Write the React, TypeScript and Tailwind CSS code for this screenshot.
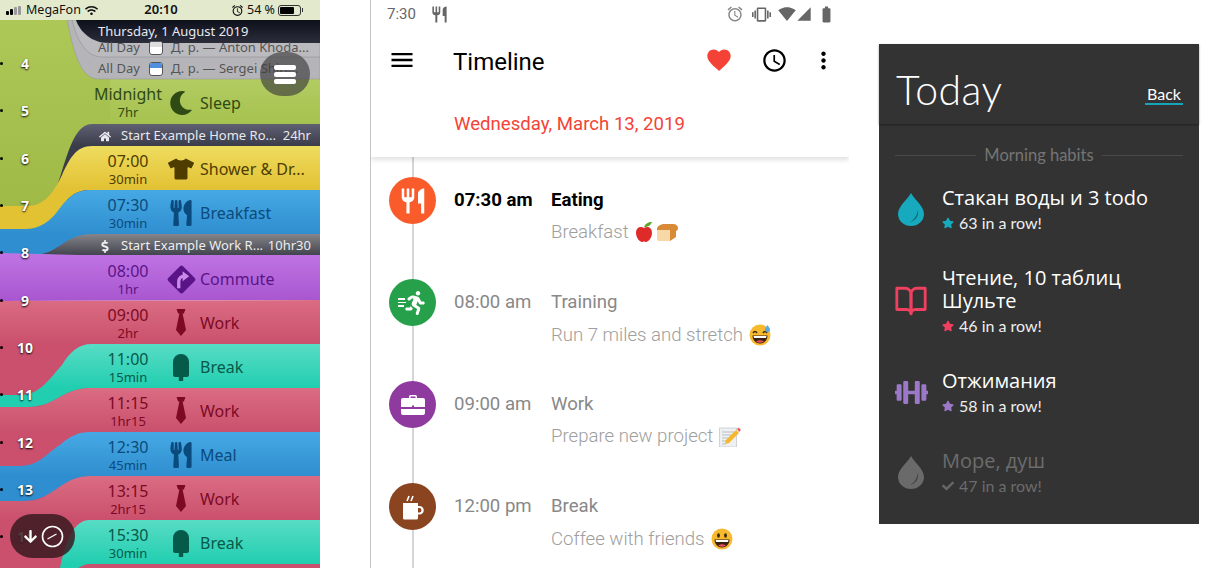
import React from "react";
import { FaTshirt, FaUtensils, FaHome, FaDollarSign, FaMoon, FaWifi, FaDumbbell, FaStar, FaCheck, FaRunning, FaArrowDown } from "react-icons/fa";
import { MdMenu, MdFavorite, MdAccessTime, MdMoreVert, MdAccessAlarm, MdVibration, MdSignalWifi4Bar, MdSignalCellular4Bar, MdBatteryFull, MdRestaurant, MdAlarm } from "react-icons/md";
import { FiBookOpen } from "react-icons/fi";

const Tie = ({ c }: { c: string }) => (
  <svg width="14" height="28" viewBox="0 0 14 28"><path fill={c} d="M2.5 0h9l-1.6 4.5H8.6L12 21l-5 6-5-6L5.4 4.5H4.1z" /></svg>
);
const Pop = ({ c }: { c: string }) => (
  <svg width="18" height="28" viewBox="0 0 18 28"><path fill={c} d="M1 9a8 8 0 0 1 16 0v13a2 2 0 0 1-2 2h-3.8v3a2 2 0 0 1-4.4 0v-3H3a2 2 0 0 1-2-2z" /></svg>
);
const Turn = () => (
  <svg width="33" height="33" viewBox="0 0 30 30" className="shrink-0 -mx-[3px]">
    <rect x="5.500" y="5.500" width="19" height="19" rx="2" transform="rotate(45 15 15)" fill="#5a1487" />
    <path d="M12.500 23v-6c0-3 2-5 5-5" fill="none" stroke="#c98ae8" strokeWidth="3" />
    <path d="M16 7.500l6 4.500-6 4.500z" fill="#c98ae8" />
  </svg>
);
const Drop = ({ c, d }: { c: string; d: string }) => (
  <svg width="26" height="33" viewBox="0 0 26 33">
    <path fill={c} d="M13 0c3 6 13 13 13 21a13 12 0 0 1-26 0C0 13 10 6 13 0z" />
    <path fill={d} d="M20 17c1 6-3 11-8 12 4-2 7-6 8-12z" />
  </svg>
);
const Cal = ({ top }: { top: string }) => (
  <div className="w-[14px] h-[14px] rounded-[3px] bg-white border border-[#555] overflow-hidden shrink-0">
    <div className={`h-[5px] ${top}`} />
  </div>
);
const Case = () => (
  <svg width="26" height="22" viewBox="0 0 26 22">
    <path fill="#fff" d="M9 4V2.500A1.500 1.500 0 0 1 10.500 1h5A1.500 1.500 0 0 1 17 2.500V4h6a2 2 0 0 1 2 2v7H1V6a2 2 0 0 1 2-2zm1.500 0h5V2.500h-5z" />
    <path fill="#fff" d="M1 15h24v4a2 2 0 0 1-2 2H3a2 2 0 0 1-2-2z" />
    <rect x="12" y="11.500" width="2" height="2" fill="#8e3a9e" />
  </svg>
);
const Cup = () => (
  <svg width="22" height="26" viewBox="0 0 22 26">
    <path d="M5 7l2-5M9 7l2-5" stroke="#fff" strokeWidth="1.600" />
    <path fill="#fff" d="M1 9h15v3h1.500a4 4 0 0 1 0 8.500H16V24a1.500 1.500 0 0 1-1.500 1.500h-12A1.500 1.500 0 0 1 1 24zm15 5v4.500h1.200a2.250 2.250 0 0 0 0-4.500z" />
  </svg>
);

const Apple = () => (
  <svg width="18" height="20" viewBox="0 0 18 20" className="inline-block">
    <path fill="#df2a2a" d="M9 6c3-2 8-1 8 5 0 5-4 9-6 9-1 0-1-.5-2-.5S8 20 7 20c-2 0-6-4-6-9 0-6 5-7 8-5z" />
    <path fill="#5fa32c" d="M9 5c1-3 4-5 8-5-1 3-4 5-8 5z" />
  </svg>
);
const Bread = () => (
  <svg width="22" height="18" viewBox="0 0 22 18" className="inline-block">
    <path fill="#f6d9a6" d="M1 7h13v11H3a2 2 0 0 1-2-2z" />
    <path fill="#d98a36" d="M1 6c0-3 4-5 8-5h8c3 0 5 2 5 4s-1 3-2 3v6l-6 4V7H1z" />
  </svg>
);
const Smile = ({ sweat }: { sweat?: boolean }) => (
  <svg width="22" height="22" viewBox="0 0 22 22" className="inline-block">
    <circle cx="11" cy="11" r="10.5" fill="#f7b92e" />
    {sweat ? (
      <>
        <path d="M4 9q2-3 4 0M14 9q2-3 4 0" stroke="#3a2a10" strokeWidth="1.5" fill="none" />
        <path fill="#5aa9e6" d="M18.5 1c1 2 2.5 3 2.5 4.500a2.500 2.500 0 0 1-5 0C16 4 17.500 3 18.500 1z" />
      </>
    ) : (
      <>
        <ellipse cx="7.500" cy="7.500" rx="1.400" ry="2.200" fill="#3a2a10" />
        <ellipse cx="14.500" cy="7.500" rx="1.400" ry="2.200" fill="#3a2a10" />
      </>
    )}
    <path fill="#3a2010" d="M3.500 11.500h15c0 4.500-3.500 8-7.500 8s-7.500-3.500-7.500-8z" />
    <path fill="#fff" d="M4.500 12h13l-.5 2H5z" />
    <path fill="#e8505b" d="M7 17.500q4-2.500 8 0-4 2.500-8 0z" />
  </svg>
);
const Memo = () => (
  <svg width="22" height="20" viewBox="0 0 22 20" className="inline-block">
    <rect x="0.500" y="1" width="17" height="19" fill="#eef0f2" stroke="#cfd3d6" />
    <path d="M3 5h12M3 8h12M3 11h9M3 14h6M3 17h4" stroke="#b9bfc4" strokeWidth="1" />
    <path fill="#f5b72e" d="M17 3l3 3-10 10-4 1 1-4z" />
    <path fill="#ee5a5a" d="M18 2l1.500-1.500 2.500 2.500L20 5z" />
  </svg>
);

const Row = ({ time, dur, icon, label, color }: { time: string; dur: string; icon: React.ReactNode; label: string; color: string }) => (
  <div className={`h-[44px] flex items-center pl-[88px] pt-[2px] ${color}`}>
    <div className="w-[80px] text-center">
      <div className="text-[16px] leading-[19px]">{time}</div>
      <div className="text-[13px] leading-[16px]">{dur}</div>
    </div>
    <div className="w-[26px] flex justify-center">{icon}</div>
    <div className="ml-[6px] text-[16px] whitespace-nowrap">{label}</div>
  </div>
);

const Band = ({ id, y1, y2, c1, c2, d }: { id: string; y1: number; y2: number; c1: string; c2: string; d: string }) => (
  <>
    <linearGradient id={id} gradientUnits="userSpaceOnUse" x1="0" x2="0" y1={y1} y2={y2}>
      <stop offset="0" stopColor={c1} />
      <stop offset="1" stopColor={c2} />
    </linearGradient>
    <path d={d} fill={`url(#${id})`} />
  </>
);

const hours = ["4", "5", "6", "7", "8", "9", "10", "11", "12", "13", "14"];

function LeftPhone() {
  return (
    <div className="relative w-[320px] h-[568px] overflow-hidden shrink-0 font-['Noto_Sans',sans-serif]">
      <svg className="absolute inset-0" width="320" height="568" viewBox="0 0 320 568">
        <Band id="g" y1={20} y2={240} c1="#adc857" c2="#9cb743" d="M0 0H320V200H80V230H0Z" />
        <Band id="g2" y1={79} y2={124} c1="#b2cc62" c2="#a6c24e" d="M110 79H320V130H110Z" />
        <path d="M67 20C72 42 78 79 98 79H320V20Z" fill="#b5b5b9" stroke="#98989c" strokeWidth="0.6" />
        <path d="M72 20C76 36 84 57 102 57H320V20Z" fill="#bbbbbf" stroke="#9c9ca0" strokeWidth="0.8" />
        <Band id="h" y1={20} y2={43} c1="#0e111c" c2="#2b2d3a" d="M76 20C80 32 92 43 108 43H320V20Z" />
        <Band id="dk" y1={124} y2={146} c1="#5f6173" c2="#3a3c4a" d="M50 206C65 170 70 124 92 124H320V200H60Z" />
        <Band id="y" y1={146} y2={190} c1="#efdc5e" c2="#e2c133" d="M0 206H28C45 206 55 190 62 175C70 158 76 146 92 146H320V190H90C75 190 68 198 60 208C50 222 40 229 25 229H0Z" />
        <Band id="b" y1={190} y2={234} c1="#46a9e5" c2="#2f8ecf" d="M0 229H25C40 229 50 222 60 208C68 198 75 190 90 190H320V258H0Z" />
        <Band id="dk2" y1={234} y2={256} c1="#85858a" c2="#3f414b" d="M42 254C60 250 68 234 92 234H320V257H80Z" />
        <Band id="p" y1={254} y2={300} c1="#bf74e3" c2="#a957d0" d="M0 253L80 255H320V300L0 301Z" />
        <Band id="r1" y1={300} y2={344} c1="#da6c83" c2="#ca506d" d="M0 301L320 300V420H0Z" />
        <Band id="r2" y1={388} y2={432} c1="#da6c83" c2="#ca506d" d="M0 407H35C50 407 65 388 90 388H320V510H0Z" />
        <Band id="t1" y1={344} y2={388} c1="#58dcc6" c2="#21ceb0" d="M0 395H20C40 395 50 378 62 365C70 352 78 344 92 344H320V388H90C70 388 60 398 50 402C40 407 30 407 20 407H0Z" />
        <Band id="r3" y1={476} y2={520} c1="#da6c83" c2="#ca506d" d="M0 501H30C50 501 60 476 90 476H320V568H0Z" />
        <Band id="b2" y1={432} y2={476} c1="#46a9e5" c2="#2f8ecf" d="M0 466H20C40 466 50 450 60 445C70 436 78 432 90 432H320V476H90C70 476 60 488 50 493C40 500 30 501 20 501H0Z" />
        <Band id="t2" y1={520} y2={564} c1="#58dcc6" c2="#21ceb0" d="M60 568C65 545 72 520 90 520H320V564H90C85 564 82 566 78 568Z" />
      </svg>

      <div className="absolute left-0 top-[40px] w-[50px] flex flex-col">
        {hours.map((h) => (
          <div key={h} className="h-[47.33px] flex items-center relative">
            <span className="w-[3px] h-[3px] rounded-full bg-black" />
            <span className="absolute left-0 w-[50px] text-center text-white text-[14px] font-bold [text-shadow:0_1px_2px_#000]">{h}</span>
          </div>
        ))}
      </div>

      <div className="relative flex flex-col">
        <div className="h-[20px] bg-[#e3e9cd] flex items-center px-[6px] text-[12.5px] text-[#111]">
          <div className="flex items-end gap-[1px] h-[9px] w-[16px]">
            <span className="w-[3px] h-[4px] bg-black rounded-[1px]" />
            <span className="w-[3px] h-[6px] bg-black rounded-[1px]" />
            <span className="w-[3px] h-[8px] bg-[#999] rounded-[1px]" />
            <span className="w-[3px] h-[9px] bg-[#999] rounded-[1px]" />
          </div>
          <span className="ml-[4px] w-[59px]">MegaFon</span>
          <FaWifi className="text-[13px]" />
          <span className="ml-[43px] font-semibold w-[40px] text-center text-[13px]">20:10</span>
          <MdAlarm className="ml-[50px] text-[13px]" />
          <span className="ml-[3px] w-[31px] whitespace-nowrap">54 %</span>
          <div className="w-[23px] h-[11px] rounded-[3px] border border-[#333] p-[1px]"><div className="w-[14px] h-full bg-black rounded-[1px]" /></div>
          <span className="w-[1px] h-[4px] bg-[#333] ml-[1px]" />
        </div>
        <div className="h-[23px] pl-[98px] flex items-center text-[13px] text-[#e8e8ee]">Thursday, 1 August 2019</div>
        <div className="h-[15px] -mt-[3px] pl-[98px] flex items-center gap-[8px] text-[13px] text-[#555] whitespace-nowrap">
          <span className="w-[43px]">All Day</span><Cal top="bg-[#dddddd]" /><span>Д. р. — Anton Khoda...</span>
        </div>
        <div className="h-[24px] pt-[4px] pl-[98px] flex items-center gap-[8px] text-[13px] text-[#555] whitespace-nowrap">
          <span className="w-[43px]">All Day</span><Cal top="bg-[#4f8fe0]" /><span>Д. р. — Sergei Shirr...</span>
        </div>
        <Row time="Midnight" dur="7hr" label="Sleep" color="h-[45px] text-[#2f4a14]" icon={<FaMoon className="text-[24px]" />} />
        <div className="h-[22px] flex items-center pl-[99px] pr-[9px] pt-[2px] text-[13px] text-[#e8e8ee] whitespace-nowrap">
          <FaHome className="text-[11px] w-[12px]" /><span className="ml-[10px] flex-1">Start Example Home Ro...</span><span>24hr</span>
        </div>
        <Row time="07:00" dur="30min" label="Shower & Dr..." color="text-[#4f3d00]" icon={<FaTshirt className="text-[26px]" />} />
        <Row time="07:30" dur="30min" label="Breakfast" color="text-[#0b4a7c]" icon={<FaUtensils className="text-[26px]" />} />
        <div className="h-[22px] flex items-center pl-[99px] pr-[9px] pt-[2px] text-[13px] text-[#eeeeee] whitespace-nowrap">
          <FaDollarSign className="text-[13px] w-[12px]" /><span className="ml-[10px] flex-1">Start Example Work R...</span><span>10hr30</span>
        </div>
        <Row time="08:00" dur="1hr" label="Commute" color="text-[#5a1487]" icon={<Turn />} />
        <Row time="09:00" dur="2hr" label="Work" color="text-[#7c0a24]" icon={<Tie c="#7c0a24" />} />
        <Row time="11:00" dur="15min" label="Break" color="text-[#055a4a]" icon={<Pop c="#055a4a" />} />
        <Row time="11:15" dur="1hr15" label="Work" color="text-[#7c0a24]" icon={<Tie c="#7c0a24" />} />
        <Row time="12:30" dur="45min" label="Meal" color="text-[#0b4a7c]" icon={<FaUtensils className="text-[26px]" />} />
        <Row time="13:15" dur="2hr15" label="Work" color="text-[#7c0a24]" icon={<Tie c="#7c0a24" />} />
        <Row time="15:30" dur="30min" label="Break" color="text-[#055a4a]" icon={<Pop c="#055a4a" />} />
      </div>

      <div className="absolute left-[260px] top-[52px] w-[50px] h-[44px] rounded-full bg-[#3c3c3c]/65 flex flex-col items-center justify-center gap-[2px]">
        <span className="w-[22px] h-[5px] bg-white rounded-[2px]" />
        <span className="w-[22px] h-[5px] bg-white rounded-[2px]" />
        <span className="w-[22px] h-[5px] bg-white rounded-[2px]" />
      </div>
      <div className="absolute left-[10px] top-[514px] w-[65px] h-[44px] rounded-full bg-[#3a1a20]/85 flex items-center pl-[13px] gap-[3px] text-white">
        <FaArrowDown className="text-[15px]" />
        <svg width="23" height="23" viewBox="0 0 23 23"><circle cx="11.500" cy="11.500" r="10" fill="none" stroke="#fff" strokeWidth="1.600" /><path d="M6.500 14l9-5" stroke="#fff" strokeWidth="1.300" /></svg>
      </div>
    </div>
  );
}

const items = [
  { time: "07:30 am", title: "Eating", sub: "Breakfast", em: <span className="inline-flex items-center gap-[3px] ml-[6px]"><Apple /><Bread /></span>, bg: "bg-[#f95c2a]", icon: <MdRestaurant className="text-[30px]" />, active: true },
  { time: "08:00 am", title: "Training", sub: "Run 7 miles and stretch", em: <span className="ml-[6px]"><Smile sweat /></span>, bg: "bg-[#26a04a]", icon: <span className="flex items-center"><span className="flex flex-col gap-[2px] mr-[-3px]"><i className="block w-[7px] h-[1.500px] bg-white" /><i className="block w-[8px] h-[1.500px] bg-white" /><i className="block w-[6px] h-[1.500px] bg-white" /></span><FaRunning className="text-[24px]" /></span>, active: false },
  { time: "09:00 am", title: "Work", sub: "Prepare new project", em: <span className="ml-[6px]"><Memo /></span>, bg: "bg-[#8e3a9e]", icon: <Case />, active: false },
  { time: "12:00 pm", title: "Break", sub: "Coffee with friends", em: <span className="ml-[6px]"><Smile /></span>, bg: "bg-[#8a4420]", icon: <Cup />, active: false },
];

function MiddlePhone() {
  return (
    <div className="ml-[50px] w-[479px] h-[568px] border-l border-[#c4c4c4] shrink-0 overflow-hidden font-['Roboto',sans-serif] relative bg-white">
      <div className="relative z-10 h-[157px] bg-white shadow-[0_3px_5px_rgba(0,0,0,0.12)]">
        <div className="h-[28px] flex items-center pl-[16px] pr-[16px] text-[#666]">
          <span className="text-[15px]">7:30</span>
          <MdRestaurant className="ml-[14px] text-[19px]" />
          <span className="flex-1" />
          <MdAccessAlarm className="text-[18px] mr-[8px] text-[#888]" />
          <MdVibration className="text-[19px] mr-[7px]" />
          <MdSignalWifi4Bar className="text-[18px]" />
          <MdSignalCellular4Bar className="text-[16px] mr-[5px]" />
          <MdBatteryFull className="text-[19px] mr-[-3px]" />
        </div>
        <div className="h-[64px] flex items-center text-black">
          <MdMenu className="ml-[17px] text-[28px]" />
          <span className="ml-[37px] mt-[3px] text-[24px]">Timeline</span>
          <span className="flex-1" />
          <MdFavorite className="text-[28px] text-[#f44336]" />
          <MdAccessTime className="ml-[28px] text-[27px]" />
          <MdMoreVert className="ml-[22px] mr-[12px] text-[27px]" />
        </div>
        <div className="pl-[83px] pt-[19px] text-[18.6px] text-[#f44336]">Wednesday, March 13, 2019</div>
      </div>
      <div className="relative pt-[20px]">
        <div className="absolute left-[41px] top-0 bottom-0 w-[2px] bg-[#d6d6d6]" />
        {items.map((it) => (
          <div key={it.time} className="relative h-[102px] flex items-start pl-[18px]">
            <div className={`w-[47px] h-[47px] rounded-full flex items-center justify-center text-white shrink-0 ${it.bg}`}>{it.icon}</div>
            <div className={`ml-[18px] w-[97px] mt-[12px] text-[18.6px] leading-[22px] whitespace-nowrap ${it.active ? "font-bold text-black" : "text-[#888]"}`}>{it.time}</div>
            <div className="mt-[12px]">
              <div className={`text-[18.6px] leading-[22px] ${it.active ? "font-bold text-black" : "text-[#888]"}`}>{it.title}</div>
              <div className="mt-[10px] text-[18.6px] leading-[22px] font-light text-[#9e9e9e] flex items-center whitespace-nowrap">{it.sub}{it.em}</div>
            </div>
          </div>
        ))}
      </div>
    </div>
  );
}

const habits = [
  { title: ["Стакан воды и 3 todo"], n: "63 in a row!", c: "text-[#17a9bd]", icon: <Drop c="#17a9bd" d="#0d5f6b" />, done: false },
  { title: ["Чтение, 10 таблиц", "Шульте"], n: "46 in a row!", c: "text-[#f0405f]", icon: <FiBookOpen className="text-[34px] text-[#f0405f]" />, done: false },
  { title: ["Отжимания"], n: "58 in a row!", c: "text-[#9c78c8]", icon: <FaDumbbell className="text-[33px] text-[#9c78c8]" />, done: false },
  { title: ["Море, душ"], n: "47 in a row!", c: "text-[#666]", icon: <Drop c="#6a6a6a" d="#3c3c3c" />, done: true },
];

function RightPhone() {
  return (
    <div className="ml-[30px] mt-[44px] w-[320px] h-[480px] bg-[#333333] shrink-0 font-['Lato','Open_Sans',sans-serif]">
      <div className="h-[80px] flex items-center pl-[17px] pr-[16px] shadow-[0_1px_2px_rgba(0,0,0,0.4)]">
        <span className="text-[41px] font-light text-white flex-1 mt-[12px] tracking-[0.5px]">Today</span>
        <span className="text-[16px] text-white border-b-2 border-[#14a5b8] px-[2px] mt-[22px] leading-[18px]">Back</span>
      </div>
      <div className="mt-[21px] px-[16px] flex items-center gap-[8px] text-[16.500px] text-[#757575] h-[20px]">
        <span className="flex-1 h-px bg-[#4a4a4a]" />
        <span>Morning habits</span>
        <span className="flex-1 h-px bg-[#4a4a4a]" />
      </div>
      <div className="mt-[21px] flex flex-col">
        {habits.map((h) => (
          <div key={h.n} className="flex items-center pl-[15px] mb-[33px] last:mb-0">
            <div className="w-[34px] flex justify-center shrink-0">{h.icon}</div>
            <div className="ml-[14px]">
              {h.title.map((t) => (
                <div key={t} className={`font-['Open_Sans',sans-serif] text-[20px] leading-[23px] ${h.done ? "text-[#6c6c6c]" : "text-white"}`}>{t}</div>
              ))}
              <div className={`mt-[4px] flex items-center text-[16px] leading-[20px] ${h.done ? "text-[#6c6c6c]" : "text-[#eeeeee]"}`}>
                {h.done ? <FaCheck className={`text-[12px] mr-[5px] ${h.c}`} /> : <FaStar className={`text-[12px] mr-[5px] ${h.c}`} />}
                {h.n}
              </div>
            </div>
          </div>
        ))}
      </div>
    </div>
  );
}

export default function App() {
  return (
    <div className="w-[1220px] h-[568px] bg-white flex items-start overflow-hidden">
      <LeftPhone />
      <MiddlePhone />
      <RightPhone />
    </div>
  );
}
